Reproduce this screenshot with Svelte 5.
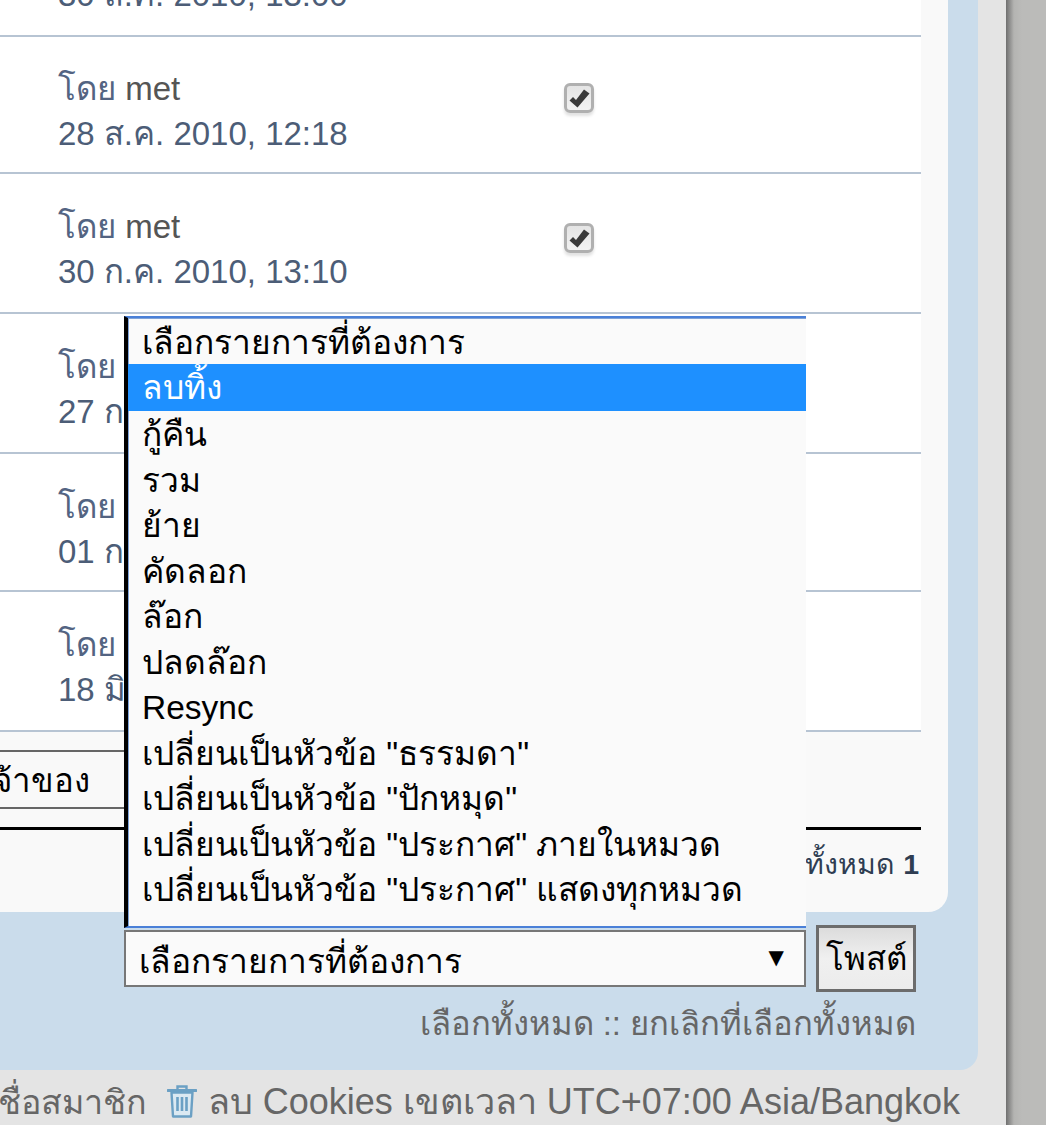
<script>
  const rows = [
    { by: 'Guest', date: '30 ส.ค. 2010, 13:00', height: 137, pad: 27, hideCheck: true },
    { by: 'met', date: '28 ส.ค. 2010, 12:18', height: 137, pad: 29, checkTop: 17 },
    { by: 'met', date: '30 ก.ค. 2010, 13:10', height: 140, pad: 30, checkTop: 19 },
    { by: 'met', date: '27 ก.ค. 2010, 09:21', height: 140, pad: 30, checkTop: 19 },
    { by: 'met', date: '01 ก.ค. 2010, 17:45', height: 138, pad: 30, checkTop: 19 },
    { by: 'met', date: '18 มิ.ย. 2010, 11:02', height: 140, pad: 30, checkTop: 19 }
  ];

  const options = [
    'เลือกรายการที่ต้องการ',
    'ลบทิ้ง',
    'กู้คืน',
    'รวม',
    'ย้าย',
    'คัดลอก',
    'ล๊อก',
    'ปลดล๊อก',
    'Resync',
    'เปลี่ยนเป็นหัวข้อ "ธรรมดา"',
    'เปลี่ยนเป็นหัวข้อ "ปักหมุด"',
    'เปลี่ยนเป็นหัวข้อ "ประกาศ" ภายในหมวด',
    'เปลี่ยนเป็นหัวข้อ "ประกาศ" แสดงทุกหมวด'
  ];
</script>

<div class="page">
  <div class="wrap">
    <div class="panel">
      <div class="inner">
        <div class="table">
          {#each rows as row}
            <div class="row" style="height: {row.height}px; padding-top: {row.pad}px">
              <div class="author">
                <div class="by">โดย <span>{row.by}</span></div>
                <div class="date">{row.date}</div>
              </div>
              {#if !row.hideCheck}
                <span class="check" style="margin-top: {row.checkTop}px">
                  <svg viewBox="0 0 21 19" width="21" height="19">
                    <path d="M0.500 11.500l3.500-3.500 3 3 8-10.500 5.500 4-12 14z" fill="#3a3a3a" />
                  </svg>
                </span>
              {/if}
            </div>
          {/each}
        </div>
        <div class="filter">
          <div class="filter-box">เจ้าของ</div>
        </div>
        <div class="pager">ทั้งหมด <strong>1</strong></div>
      </div>

      <div class="actions">
        <div class="select-wrap">
          <ul class="dropdown">
            {#each options as option, i}
              <li class:selected={i === 1}>{option}</li>
            {/each}
          </ul>
          <div class="select">
            <span>เลือกรายการที่ต้องการ</span>
            <span class="arrow">▼</span>
          </div>
        </div>
        <button class="post">โพสต์</button>
      </div>
      <div class="mark">เลือกทั้งหมด :: ยกเลิกที่เลือกทั้งหมด</div>
    </div>

    <div class="footer">
      <span class="member">ชื่อสมาชิก</span>
      <svg class="trash" viewBox="0 0 30 36" width="30" height="36">
        <path d="M10.500 5.500V2.500h9v3" fill="none" stroke="#6ba0c4" stroke-width="2.400" />
        <path d="M1 6.500h28" stroke="#6ba0c4" stroke-width="3" stroke-linecap="round" />
        <path d="M4.500 8.500l1.500 24h18l1.500-24z" fill="#dbe9f2" stroke="#6ba0c4" stroke-width="2.400" stroke-linejoin="round" />
        <path d="M10.500 13v14M15 13v14M19.500 13v14" stroke="#6ba0c4" stroke-width="2.600" />
      </svg>
      <span>ลบ Cookies เขตเวลา UTC+07:00 Asia/Bangkok</span>
    </div>
  </div>
  <div class="edge"></div>
</div>

<style>
  :global(body) {
    margin: 0;
    overflow: hidden;
  }

  .page {
    display: flex;
    height: 1125px;
    overflow: hidden;
    background: #bbbbb9;
    font-family: "Liberation Sans", Arial, sans-serif;
  }

  .wrap {
    width: 1006px;
    flex: none;
    background: #e4e4e4;
  }

  .edge {
    flex: 1;
    background: linear-gradient(to right, #6f6f6f, #b4b4b2 8px, #bbbbb9 16px);
  }

  .panel {
    width: 978px;
    box-sizing: border-box;
    height: 1070px;
    padding-right: 30px;
    background: #cadceb;
    border-radius: 0 0 18px 0;
  }

  .inner {
    display: flow-root;
    height: 912px;
    box-sizing: border-box;
    padding-right: 27px;
    background: #f9f9f9;
    border-radius: 0 0 20px 0;
  }

  .table {
    background: #fff;
    margin-top: -100px;
  }

  .row {
    box-sizing: border-box;
    display: flex;
    align-items: flex-start;
    padding-left: 58px;
    border-bottom: 2px solid #b7c4d3;
  }

  .author {
    width: 506px;
    flex: none;
    font-size: 33px;
    line-height: 45px;
  }

  .by {
    color: #536482;
  }

  .by span {
    color: #555;
  }

  .date {
    color: #4c5d77;
  }

  .check {
    display: flex;
    align-items: center;
    justify-content: center;
    width: 30px;
    height: 30px;
    box-sizing: border-box;
    border: 3px solid #b0b0b0;
    border-radius: 6px;
    background: linear-gradient(#e4e4e4, #f2f2f2);
    box-shadow: 0 3px 3px #e2e2e2;
  }

  .filter {
    padding-top: 18px;
    height: 98px;
    box-sizing: border-box;
    border-bottom: 3px solid #000;
  }

  .filter-box {
    width: 200px;
    height: 59px;
    margin-left: -36px;
    padding-left: 16px;
    box-sizing: border-box;
    border: 2px solid #666;
    background: #f9f9f9;
    color: #000;
    font-size: 33px;
    line-height: 57px;
  }

  .pager {
    text-align: right;
    padding: 16px 2px 0 0;
    font-size: 28.500px;
    line-height: 36px;
    color: #2f3d52;
  }

  .actions {
    display: flex;
    justify-content: flex-end;
    gap: 10px;
    padding-top: 13px;
    margin-right: 32px;
    align-items: flex-start;
  }

  .select-wrap {
    position: relative;
    margin-top: 5px;
  }

  .select {
    width: 682px;
    height: 57px;
    box-sizing: border-box;
    display: flex;
    justify-content: space-between;
    padding: 0 20px 0 13px;
    border: 2px solid #777;
    background: #fafafa;
    color: #000;
    font-size: 33.500px;
    line-height: 59px;
  }

  .arrow {
    font-size: 20px;
    line-height: 50px;
    font-family: "DejaVu Sans", sans-serif;
  }

  .dropdown {
    position: absolute;
    left: 0;
    bottom: 100%;
    width: 682px;
    height: 612px;
    margin: 0 0 2px;
    padding: 0.500px 0 0;
    box-sizing: border-box;
    list-style: none;
    background: #fafafa;
    border-left: 4px solid #000;
    border-top: 2px solid #4a80d8;
    border-bottom: 2px solid #4a80d8;
    box-shadow: inset 1px 1px 0 #7fa3d8;
    color: #000;
    font-size: 33.500px;
  }

  .dropdown li {
    height: 45.500px;
    line-height: 47px;
    padding-left: 14px;
    white-space: nowrap;
    overflow: hidden;
  }

  .dropdown li.selected {
    height: 47px;
    background: #1e90ff;
    color: #fff;
  }

  .post {
    width: 100px;
    height: 67px;
    padding: 0;
    border: 3px solid #6c6c6c;
    background: linear-gradient(#dcdcdc, #f0f0f0 50%, #ececec);
    color: #000;
    font-family: inherit;
    font-size: 33px;
  }

  .mark {
    margin-top: 12px;
    margin-right: 32px;
    text-align: right;
    font-size: 32.800px;
    line-height: 40px;
    color: #666;
  }

  .footer {
    display: flex;
    justify-content: flex-end;
    align-items: center;
    gap: 11px;
    padding: 10px 46px 0 0;
    white-space: nowrap;
    font-size: 36px;
    line-height: 44px;
    color: #666;
  }

  .member {
    font-size: 34px;
    margin-right: 9px;
  }

  .trash {
    flex: none;
  }
</style>
